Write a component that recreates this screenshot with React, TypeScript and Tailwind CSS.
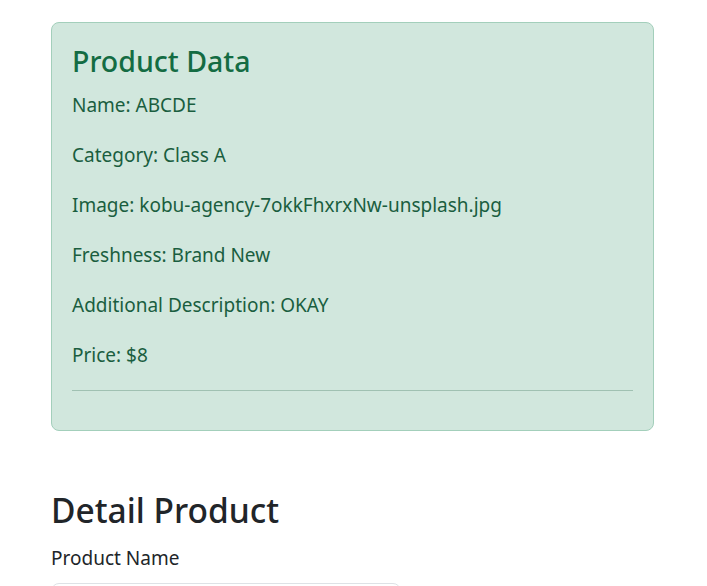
import React from "react";

const rows = [
  "Name: ABCDE",
  "Category: Class A",
  "Image: kobu-agency-7okkFhxrxNw-unsplash.jpg",
  "Freshness: Brand New",
  "Additional Description: OKAY",
  "Price: $8",
];

export default function App() {
  return (
    <div
      className="h-[586px] overflow-hidden bg-white pl-[51px] pr-[53px] pt-[22px] text-[#212529]"
      style={{ fontFamily: '"Noto Sans", "Open Sans", sans-serif' }}
    >
      <div className="rounded-[8px] border border-[#a3cfbb] bg-[#d1e7dd] px-5 pb-[19px] pt-5 text-[#1a5e3f]">
        <h3 className="mb-[11px] text-[28.5px] font-medium leading-[36px] text-[#146c43]">Product Data</h3>
        {rows.map((r) => (
          <p key={r} className="mb-5 text-[19px] leading-[30px]">
            {r}
          </p>
        ))}
        <hr className="my-5 border-t border-[#0f5132] opacity-25" />
      </div>

      <h2 className="mt-[58px] text-[33.5px] font-medium leading-[43px]">Detail Product</h2>
      <label className="mt-[11px] block text-[19px] leading-[30px]">Product Name</label>
      <div className="mt-[10px] h-[40px] w-[350px] rounded-[8px] border border-[#dee2e6] bg-white" />
    </div>
  );
}
